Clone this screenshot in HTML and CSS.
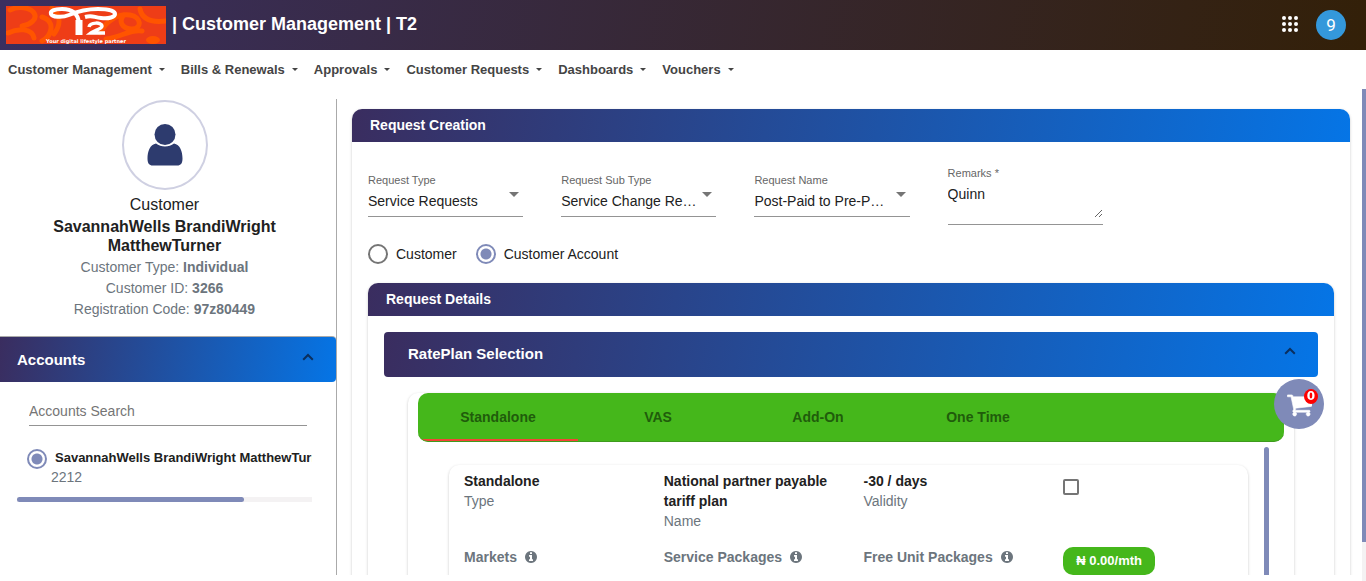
FILE: index.html
```html
<!DOCTYPE html>
<html lang="en">
<head>
<meta charset="utf-8">
<title>Customer Management | T2</title>
<link rel="stylesheet" href="styles.css">
</head>
<body>
<svg class="defs" aria-hidden="true">
  <symbol id="info" viewBox="0 0 1536 1792"><path d="M1024 1376v-160q0-14-9-23t-23-9h-96v-512q0-14-9-23t-23-9h-320q-14 0-23 9t-9 23v160q0 14 9 23t23 9h96v320h-96q-14 0-23 9t-9 23v160q0 14 9 23t23 9h448q14 0 23-9t9-23zm-128-896v-160q0-14-9-23t-23-9h-192q-14 0-23 9t-9 23v160q0 14 9 23t23 9h192q14 0 23-9t9-23zm640 416q0 209-103 385.5t-279.5 279.5-385.5 103-385.5-103-279.5-279.5-103-385.5 103-385.5 279.5-279.5 385.5-103 385.5 103 279.5 279.5 103 385.5z"/></symbol>
  <symbol id="chevron" viewBox="0 0 12 8"><path d="M1.2 6.8 6 2l4.800 4.800" fill="none" stroke="currentColor" stroke-width="2"/></symbol>
</svg>

<header class="topbar">
  <svg class="logo" viewBox="0 0 160 38" role="img" aria-label="T2">
    <rect width="160" height="38" fill="#ee3d17"/>
    <g fill="none" stroke="#ff5400" stroke-width="5" stroke-linecap="round">
      <path d="M4 4c8-4 20-3 24 3s-4 12-12 13"/>
      <path d="M2 27c10-5 24-5 26 5M36 11c14 4 10 19 0 24M46 2c10 8 8 18 2 26"/>
      <path d="M94 27c6-12 18-20 30-18s12 14 2 14-14-8-8-14M134 3c2 10 10 14 26 12M100 33c16-2 24-10 36-8"/>
    </g>
    <ellipse cx="147" cy="34" rx="7" ry="4" fill="#ff5400"/>
    <path d="M73 27V17C72 7 66 3 56 3c-8 0-12 2-11 5s11 4 18 1S78 3 92 3c11 0 17 2 17 5s-6 5-14 4-9-3-16-1" fill="none" stroke="#fff" stroke-width="4"/>
    <path d="M73 29V14" stroke="#fff" stroke-width="7"/>
    <path d="M83 21c1-5 13-5 13-1 0 3-7 4-11 7h14" fill="none" stroke="#fff" stroke-width="3.500"/>
    <text class="logo-tag" x="80" y="37" text-anchor="middle">Your digital lifestyle partner</text>
  </svg>
  <h1 class="title">| Customer Management | T2</h1>
  <button class="apps" aria-label="Apps">
    <svg viewBox="0 0 18 18" width="18" height="18" fill="#fff"><circle cx="3" cy="3" r="2"/><circle cx="9" cy="3" r="2"/><circle cx="15" cy="3" r="2"/><circle cx="3" cy="9" r="2"/><circle cx="9" cy="9" r="2"/><circle cx="15" cy="9" r="2"/><circle cx="3" cy="15" r="2"/><circle cx="9" cy="15" r="2"/><circle cx="15" cy="15" r="2"/></svg>
  </button>
  <button class="avatar">9</button>
</header>

<nav class="menu">
  <a href="#">Customer Management</a>
  <a href="#">Bills &amp; Renewals</a>
  <a href="#">Approvals</a>
  <a href="#">Customer Requests</a>
  <a href="#">Dashboards</a>
  <a href="#">Vouchers</a>
</nav>

<div class="layout">
  <aside class="side">
    <section class="profile">
      <div class="portrait">
        <svg viewBox="0 0 36 42" width="36" height="42" fill="#2d3b6e"><circle cx="18" cy="10.500" r="10.500"/><path d="M9 19.500c5 4 13 4 18 0 6 1 8.500 8 8.500 15 0 5-2 7-5 7h-25c-3 0-5-2-5-7 0-7 2.500-14 8.500-15z"/></svg>
      </div>
      <div class="role">Customer</div>
      <h2 class="name">SavannahWells BrandiWright MatthewTurner</h2>
      <p class="fact">Customer Type: <b>Individual</b></p>
      <p class="fact">Customer ID: <b>3266</b></p>
      <p class="fact">Registration Code: <b>97z80449</b></p>
    </section>
    <button class="accounts-head grad">Accounts<svg class="chevron" width="12" height="8"><use href="#chevron"/></svg></button>
    <section class="accounts">
      <input class="search" type="text" placeholder="Accounts Search" aria-label="Accounts Search">
      <div class="account">
        <input class="radio" type="radio" name="account" id="acc" checked>
        <label for="acc"><b>SavannahWells BrandiWright MatthewTurner</b><span>2212</span></label>
      </div>
      <div class="hbar"><div class="hbar-thumb"></div></div>
    </section>
  </aside>

  <main class="main">
    <section class="card">
      <h2 class="card-head grad">Request Creation</h2>
      <div class="card-body">
        <form class="fields">
          <div class="field pick">
            <label for="rt">Request Type</label>
            <select id="rt"><option>Service Requests</option></select>
          </div>
          <div class="field pick">
            <label for="rs">Request Sub Type</label>
            <select id="rs"><option>Service Change Re…</option></select>
          </div>
          <div class="field pick">
            <label for="rn">Request Name</label>
            <select id="rn"><option>Post-Paid to Pre-P…</option></select>
          </div>
          <div class="field remarks">
            <label for="rm">Remarks *</label>
            <div class="note"><textarea id="rm">Quinn</textarea></div>
          </div>
        </form>
        <div class="choices">
          <label><input class="radio" type="radio" name="level">Customer</label>
          <label><input class="radio" type="radio" name="level" checked>Customer Account</label>
        </div>
        <section class="card">
          <h2 class="card-head grad">Request Details</h2>
          <div class="card-body">
            <button class="panel-head grad">RatePlan Selection<svg class="chevron" width="12" height="8"><use href="#chevron"/></svg></button>
            <div class="plans">
              <div class="tabs" role="tablist">
                <button class="tab active" role="tab" aria-selected="true">Standalone</button>
                <button class="tab" role="tab">VAS</button>
                <button class="tab" role="tab">Add-On</button>
                <button class="tab" role="tab">One Time</button>
              </div>
              <div class="plan-scroll">
                <article class="plan">
                  <div class="cell"><b>Standalone</b><span>Type</span></div>
                  <div class="cell"><b>National partner payable tariff plan</b><span>Name</span></div>
                  <div class="cell"><b>-30 / days</b><span>Validity</span></div>
                  <div class="cell"><input class="check" type="checkbox" aria-label="Select plan"></div>
                  <div class="cell more">Markets<svg class="info"><use href="#info"/></svg></div>
                  <div class="cell more">Service Packages<svg class="info"><use href="#info"/></svg></div>
                  <div class="cell more">Free Unit Packages<svg class="info"><use href="#info"/></svg></div>
                  <div class="cell"><button class="price">₦ 0.00/mth</button></div>
                </article>
                <div class="vbar"></div>
              </div>
            </div>
          </div>
        </section>
      </div>
    </section>
  </main>
  <div class="page-bar"><div class="page-thumb"></div></div>
</div>

<button class="cart" aria-label="Cart">
  <svg viewBox="0 0 1664 1792" width="25" height="27" fill="#fff" stroke="#fff" stroke-width="40"><path d="M640 1536q0 52-38 90t-90 38-90-38-38-90 38-90 90-38 90 38 38 90zm896 0q0 52-38 90t-90 38-90-38-38-90 38-90 90-38 90 38 38 90zm128-1088v512q0 24-16.500 42.500t-40.500 21.500l-1044 122q13 60 13 70 0 16-24 64h920q26 0 45 19t19 45-19 45-45 19h-1024q-26 0-45-19t-19-45q0-11 8-31.500t16-36 21.500-40 15.500-29.500l-177-823h-204q-26 0-45-19t-19-45 19-45 45-19h256q16 0 28.500 6.500t19.500 15.500 13 24.500 8 26 5.500 29.500 4.500 26h1201q26 0 45 19t19 45z"/></svg>
  <span class="badge">0</span>
</button>
</body>
</html>
```
FILE: styles.css
```css
* { box-sizing: border-box; }

body {
  margin: 0;
  height: 100vh;
  display: flex;
  flex-direction: column;
  overflow: hidden;
  background: #fff;
  color: #212121;
  font: 14px/20px "Liberation Sans", Arial, sans-serif;
}

h1, h2, p { margin: 0; }
button, input, select, textarea { font: inherit; color: inherit; }
button { border: 0; padding: 0; background: none; cursor: pointer; }
.defs { position: absolute; width: 0; height: 0; }
.grad { background: linear-gradient(100deg, #3a2d5f, #0575e6); color: #fff; }
.chevron { color: #0b2f5e; margin-bottom: 5px; }

/* Top bar */
.topbar {
  flex: none;
  height: 50px;
  padding: 0 20px 2px 6px;
  display: flex;
  align-items: center;
  background: linear-gradient(100deg, #3a2f60, #332008);
  color: #fff;
}
.logo { width: 160px; height: 38px; margin-top: 2px; }
.logo-tag { font: bold 5px "DejaVu Sans", sans-serif; fill: #fff; }
.title { flex: 1; margin-left: 6px; font-size: 18px; line-height: 24px; }
.apps { height: 18px; margin-right: 17px; }
.apps svg { display: block; }
.avatar {
  width: 30px;
  height: 30px;
  margin-top: 2px;
  border-radius: 50%;
  background: #3498db;
  color: #fff;
  font: 17px Roboto, sans-serif;
}

/* Menu */
.menu {
  flex: none;
  height: 39px;
  padding-left: 8px;
  display: flex;
  align-items: center;
  gap: 16px;
}
.menu a {
  display: flex;
  align-items: center;
  gap: 7px;
  color: #444;
  font-size: 13px;
  font-weight: bold;
  text-decoration: none;
}
.menu a::after {
  content: "";
  border: 3px solid transparent;
  border-top-color: #444;
  border-bottom: 0;
}

.layout { flex: 1; min-height: 0; display: flex; }

/* Side column */
.side {
  flex: none;
  width: 337px;
  margin: 10px 0 6px;
  border-right: 1px solid #aaa;
  overflow: hidden;
}
.profile { padding: 1px 44px 16px 37px; text-align: center; }
.portrait {
  width: 86px;
  height: 90px;
  margin: 0 auto 5px;
  border: 2px solid #cfd0e2;
  border-radius: 50%;
  display: grid;
  place-items: center;
}
.role { font-size: 16px; }
.name { font-size: 16px; line-height: 19px; margin: 2px 0; }
.fact { color: #6c757d; line-height: 21px; }
.accounts-head {
  width: 100%;
  height: 46px;
  padding: 0 22px 0 17px;
  border-top: 1px solid #aaa;
  border-radius: 0 4px 4px 0;
  display: flex;
  align-items: center;
  justify-content: space-between;
  font-size: 15px;
  font-weight: bold;
}
.accounts { padding: 14px 24px 0 17px; }
.search {
  display: block;
  width: 278px;
  height: 30px;
  margin-left: 12px;
  padding: 0;
  border: 0;
  border-bottom: 1px solid #949494;
  background: none;
}
.search::placeholder { color: #757575; }
.account {
  display: flex;
  margin-top: 22px;
  padding-left: 10px;
  overflow: hidden;
}
.account label { margin-left: 4px; white-space: nowrap; line-height: 19px; }
.account b { display: block; margin-left: 4px; font-size: 13px; line-height: 20px; }
.account span { color: #6c757d; }

.radio {
  appearance: none;
  flex: none;
  width: 20px;
  height: 20px;
  margin: 1px 0 0;
  border: 2px solid #757575;
  border-radius: 50%;
}
.radio:checked {
  border-color: #7f8ab8;
  background: radial-gradient(circle, #7f8ab8 5px, transparent 6px);
}
.hbar { height: 5px; margin-top: 10px; background: #f4f2f3; }
.hbar-thumb { width: 77%; height: 5px; border-radius: 3px; background: #7f8ab8; }

/* Main column */
.main { flex: 1; min-width: 0; margin-bottom: 6px; padding: 20px 12px 0 15px; overflow: hidden; }
.page-bar { flex: none; width: 4px; background: #f4f2f3; }
.page-thumb { height: 92%; background: #7f8ab8; }

.card { border-radius: 10px; box-shadow: 0 1px 3px rgba(0, 0, 0, .22); }
.card-head {
  height: 33px;
  padding-left: 18px;
  border-radius: 10px 10px 0 0;
  font-size: 14px;
  line-height: 32px;
}
.card-body { padding: 16px; }

.fields { display: grid; grid-template-columns: repeat(5, 1fr); padding-top: 6px; }
.field { position: relative; padding: 9px 38px 0 0; }
.field label { display: block; color: #666; font-size: 11px; line-height: 14px; }
.pick select {
  appearance: none;
  display: block;
  width: 100%;
  height: 30px;
  margin: 0;
  padding: 0 18px 2px 0;
  border: 0;
  border-bottom: 1px solid #949494;
  border-radius: 0;
  background: none;
}
.pick::after {
  content: "";
  position: absolute;
  right: 42px;
  top: 28px;
  border: 5px solid transparent;
  border-top-color: #757575;
  border-bottom: 0;
  pointer-events: none;
}
.remarks { padding-top: 2px; }
.note { border-bottom: 1px solid #949494; padding-bottom: 6px; }
.note textarea {
  display: block;
  width: 100%;
  height: 38px;
  padding: 4px 0 0;
  border: 0;
  background: none;
  resize: vertical;
}

.choices { display: flex; gap: 19px; margin: 19px 0; }
.choices label { display: flex; align-items: center; gap: 8px; }
.choices .radio { margin: 0; }

.panel-head {
  width: 100%;
  height: 45px;
  padding: 0 22px 2px 24px;
  border-radius: 4px;
  display: flex;
  align-items: center;
  justify-content: space-between;
  font-size: 15px;
  font-weight: bold;
}
.plans {
  margin: 16px 24px 0;
  padding: 0 10px 20px;
  border-radius: 10px;
  box-shadow: 0 1px 3px rgba(0, 0, 0, .22);
}
.tabs {
  display: flex;
  height: 49px;
  border-radius: 10px;
  border-bottom: 1px solid #3e9b1d;
  background: #45b71b;
  overflow: hidden;
}
.tab { width: 160px; padding-top: 2px; border-bottom: 2px solid transparent; color: #205c0b; font-weight: bold; }
.tab.active { border-bottom-color: #f44336; }

.plan-scroll { display: flex; justify-content: space-between; padding: 5px 15px 0 31px; }
.plan {
  flex: 1;
  margin: 18px 16px 0 0;
  padding: 6px 0 16px;
  border-radius: 10px;
  box-shadow: 0 1px 3px rgba(0, 0, 0, .22);
  display: grid;
  grid-template-columns: repeat(4, 1fr);
  row-gap: 16px;
}
.cell { padding: 0 15px; }
.cell b, .cell span { display: block; }
.cell span, .more { color: #6c757d; }
.more { display: flex; align-items: center; font-weight: bold; height: 20px; }
.info { width: 12px; height: 14px; margin-left: 8px; fill: currentColor; }
.check {
  appearance: none;
  display: block;
  width: 16px;
  height: 16px;
  margin: 8px 0 0;
  border: 2px solid #757575;
  border-radius: 2px;
}
.price {
  height: 28px;
  padding: 0 13px;
  border-radius: 10px;
  background: #45b71b;
  color: #fff;
  font-size: 13px;
  font-weight: bold;
}
.vbar { width: 5px; border-radius: 3px; background: #7f8ab8; }

/* Floating cart */
.cart {
  position: fixed;
  right: 42px;
  top: 379px;
  width: 50px;
  height: 50px;
  border-radius: 50%;
  background: #7f8ab8;
  display: grid;
  place-items: center;
}
.badge {
  position: absolute;
  top: 10px;
  right: 6px;
  width: 14px;
  height: 15px;
  border-radius: 50%;
  background: red;
  color: #fff;
  font: bold 12px/15px "DejaVu Sans", sans-serif;
}
```
